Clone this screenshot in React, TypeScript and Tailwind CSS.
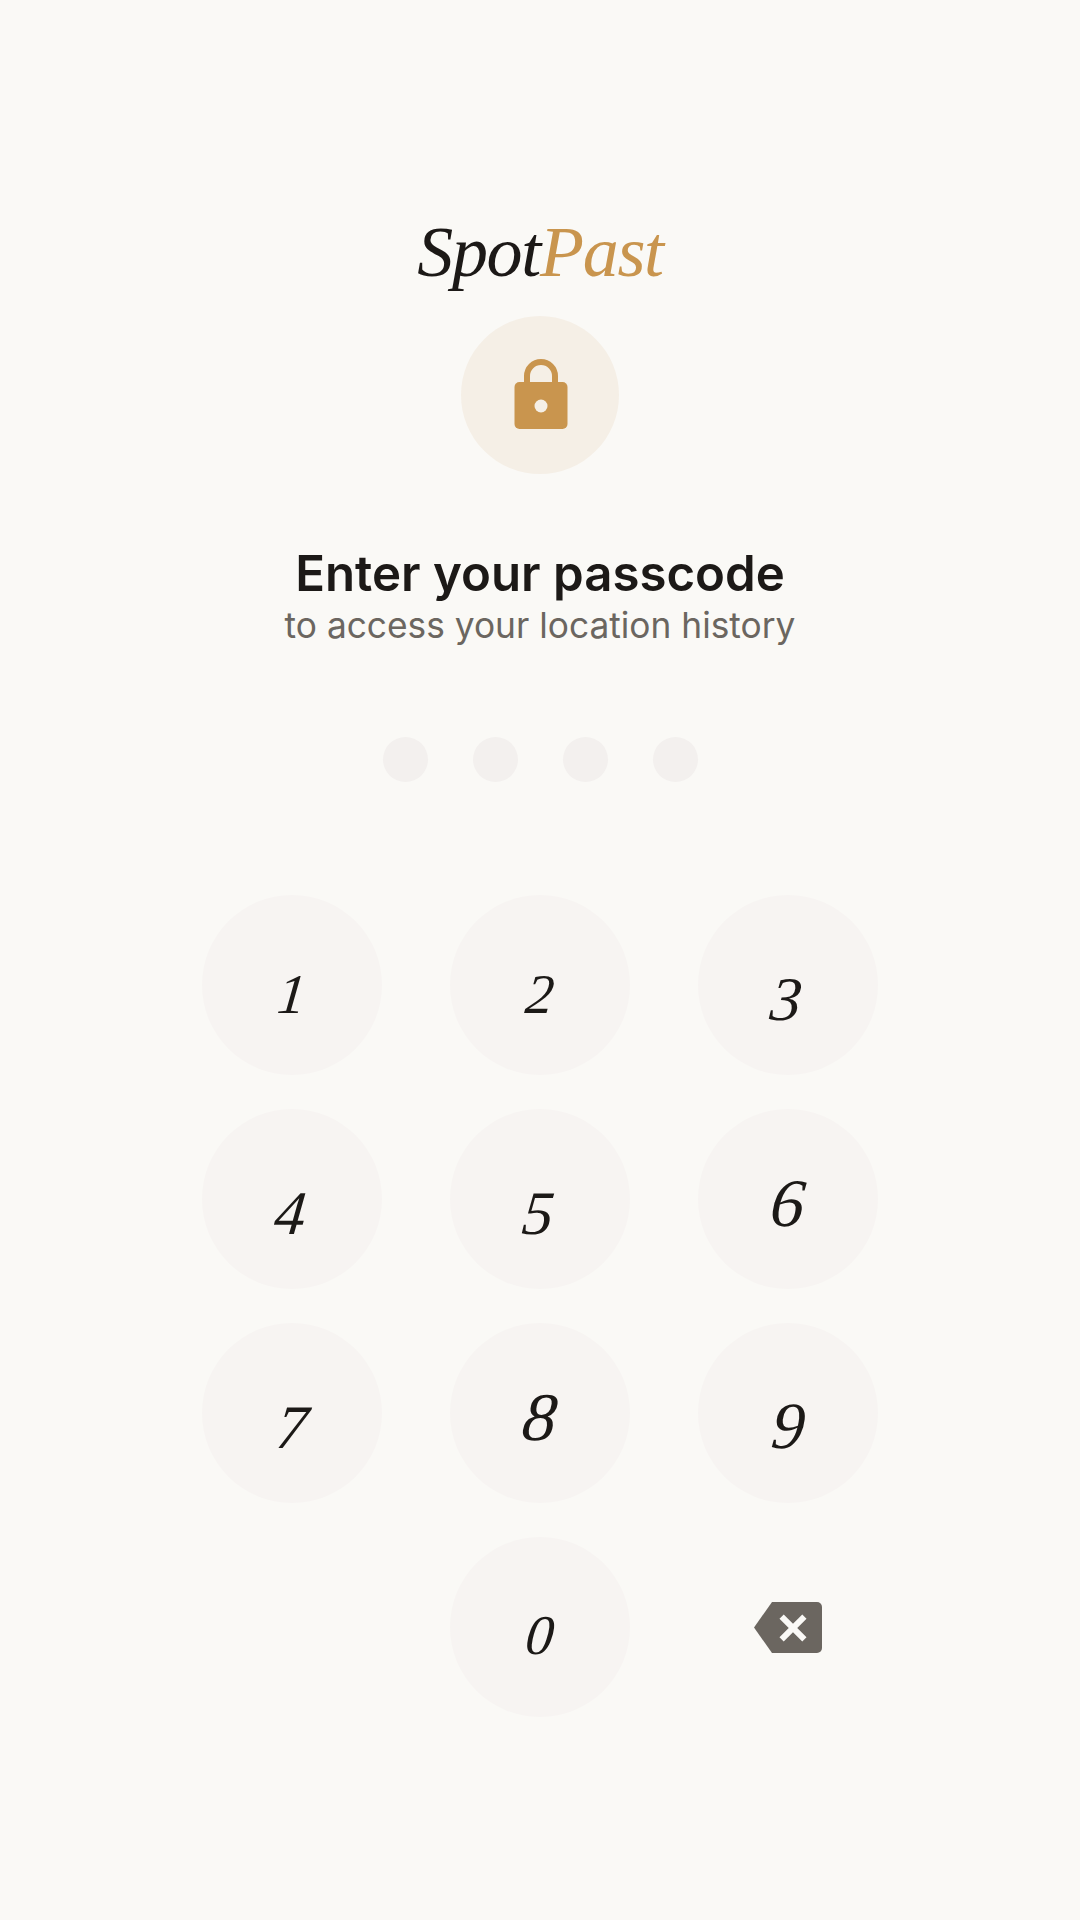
const digits = [
  { d: "1", cls: "text-[56px] pt-[18px]" },
  { d: "2", cls: "text-[56px] pt-[18px]" },
  { d: "3", cls: "text-[62px] pt-[28px] pr-[4px]" },
  { d: "4", cls: "text-[62px] pt-[28px] pr-[4px]" },
  { d: "5", cls: "text-[62px] pt-[28px] pr-[4px]" },
  { d: "6", cls: "text-[68px] pt-[8px]" },
  { d: "7", cls: "text-[62px] pt-[28px]" },
  { d: "8", cls: "text-[68px] pt-[8px]" },
  { d: "9", cls: "text-[66px] pt-[26px]" },
];

function Key({ d, cls }: { d: string; cls: string }) {
  return (
    <button className={`flex h-[180px] w-[180px] items-center justify-center rounded-full bg-[#f7f4f2] font-['Liberation_Serif',serif] italic leading-none text-[#1c1917] ${cls}`}>
      <span className="-skew-x-6">{d}</span>
    </button>
  );
}

export default function App() {
  return (
    <div className="flex min-h-[1920px] w-[1080px] flex-col items-center bg-[#faf9f6] pt-[210px] font-['Inter',sans-serif]">
      <div className="h-[84px] font-['Liberation_Serif',serif] text-[72px] italic leading-[84px] tracking-[-1.3px] text-[#1c1917]">
        Spot<span className="text-[#c9954e]">Past</span>
      </div>
      <div className="mt-[22px] flex h-[158px] w-[158px] items-center justify-center rounded-full bg-[#f5efe6]">
        <svg width="54" height="70" viewBox="0 0 54 70" className="ml-[1px] mt-[-2px]">
          <path d="M13 28V17a14 14 0 0 1 28 0V28" fill="none" stroke="#c9954e" strokeWidth="6" />
          <rect x="0.5" y="23" width="53" height="47" rx="5" fill="#c9954e" />
          <circle cx="27" cy="47" r="6.5" fill="#f5efe6" />
        </svg>
      </div>
      <h1 className="mt-[70px] text-[49.2px] font-semibold leading-[58px] text-[#1c1917]">Enter your passcode</h1>
      <p className="mt-[2px] text-[35.3px] leading-[44px] text-[#6b6660]">to access your location history</p>
      <div className="mt-[89px] flex gap-[45px]">
        {[0, 1, 2, 3].map((i) => (
          <div key={i} className="h-[45px] w-[45px] rounded-full bg-[#f3f0ee]" />
        ))}
      </div>
      <div className="mt-[113px] grid grid-cols-[180px_180px_180px] gap-x-[68px] gap-y-[34px]">
        {digits.map((k) => (
          <Key key={k.d} d={k.d} cls={k.cls} />
        ))}
        <div />
        <Key d="0" cls="text-[56px] pt-[16px]" />
        <button className="flex h-[180px] w-[180px] items-center justify-center">
          <svg width="68" height="51" viewBox="0 0 68 51">
            <path d="M18 0H63a5 5 0 0 1 5 5V46a5 5 0 0 1-5 5H18L0 25.5Z" fill="#6b6660" />
            <path d="M27.6 14.6L50.4 37.4M50.4 14.6L27.6 37.4" stroke="#faf9f6" strokeWidth="6" fill="none" />
          </svg>
        </button>
      </div>
    </div>
  );
}
